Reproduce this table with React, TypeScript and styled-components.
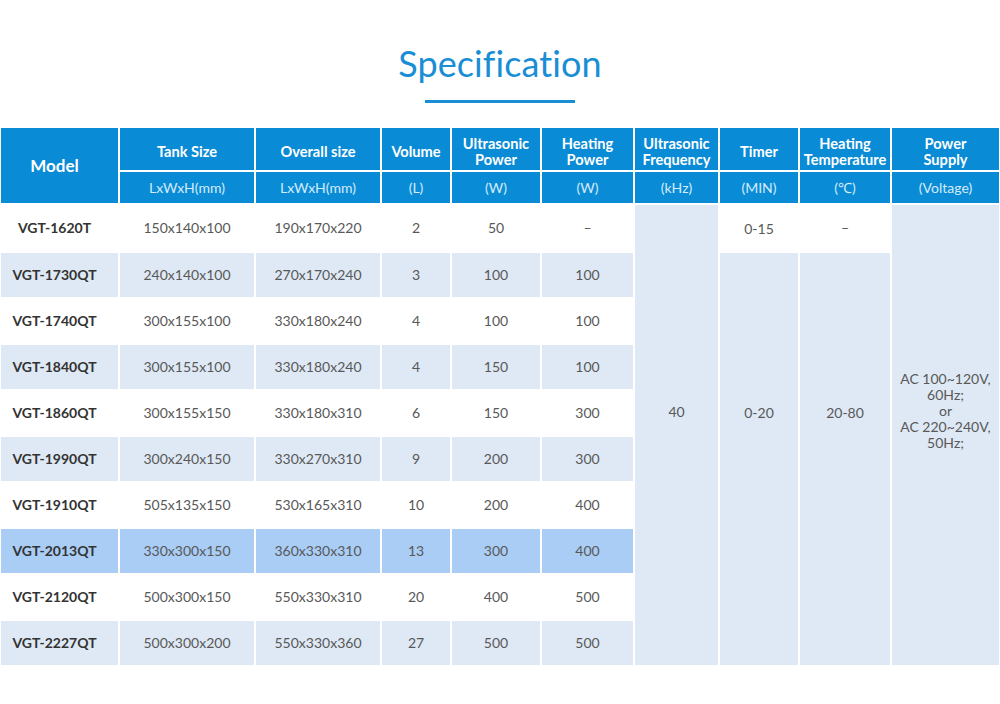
import React from "react";
import styled, { createGlobalStyle } from "styled-components";

const Global = createGlobalStyle`
  html, body { margin: 0; padding: 0; background: #fff; }
  body { font-family: Lato, "Open Sans", Arial, sans-serif; }
`;

const Page = styled.div`
  width: 1000px;
  height: 704px;
  display: flex;
  flex-direction: column;
  align-items: center;
  padding-top: 38px;
  box-sizing: border-box;
`;

const Title = styled.h1`
  margin: 0;
  font-family: Lato, sans-serif;
  font-weight: 400;
  font-size: 36px;
  line-height: 50px;
  color: #1a8ed5;
  letter-spacing: 0.1px;
`;

const Rule = styled.div`
  width: 150px;
  height: 3px;
  background: #1a8ed5;
  margin-top: 12px;
  margin-bottom: 23px;
`;

const Table = styled.table`
  width: 1000px;
  border-collapse: collapse;
  table-layout: fixed;
  font-family: Lato, sans-serif;
  margin: 0 -1px;
`;

const Head = styled.th<{ $big?: boolean }>`
  background: #0a8bd6;
  color: #fff;
  border: 2px solid #fff;
  font-weight: 700;
  font-size: ${(p) => (p.$big ? "17px" : "14.6px")};
  line-height: 16px;
  height: 44px;
  padding: ${(p) => (p.$big ? "0 10px 0 0" : "6px 0 0 0")};
  text-align: center;
  box-sizing: border-box;
`;

const Unit = styled.th`
  background: #0a8bd6;
  color: #d5ebfa;
  border: 2px solid #fff;
  font-weight: 400;
  font-size: 14px;
  height: 31px;
  padding: 0;
  text-align: center;
`;

const Cell = styled.td<{ $bg: string; $model?: boolean; $lift?: number }>`
  background: ${(p) => p.$bg};
  border: 2px solid #fff;
  height: 44px;
  padding: 0 ${(p) => (p.$model ? "10px" : "0")} ${(p) => p.$lift ?? 0}px 0;
  text-align: center;
  font-size: 14px;
  color: ${(p) => (p.$model ? "#333" : "#585858")};
  font-weight: ${(p) => (p.$model ? 700 : 400)};
  line-height: 16px;
`;

const WHITE = "#ffffff";
const LIGHT = "#dee9f5";
const HIGH = "#a9cdf5";

const rows = [
  ["VGT-1620T", "150x140x100", "190x170x220", "2", "50", "–"],
  ["VGT-1730QT", "240x140x100", "270x170x240", "3", "100", "100"],
  ["VGT-1740QT", "300x155x100", "330x180x240", "4", "100", "100"],
  ["VGT-1840QT", "300x155x100", "330x180x240", "4", "150", "100"],
  ["VGT-1860QT", "300x155x150", "330x180x310", "6", "150", "300"],
  ["VGT-1990QT", "300x240x150", "330x270x310", "9", "200", "300"],
  ["VGT-1910QT", "505x135x150", "530x165x310", "10", "200", "400"],
  ["VGT-2013QT", "330x300x150", "360x330x310", "13", "300", "400"],
  ["VGT-2120QT", "500x300x150", "550x330x310", "20", "400", "500"],
  ["VGT-2227QT", "500x300x200", "550x330x360", "27", "500", "500"],
];

const widths = [119, 136, 126, 70, 90, 93, 85, 80, 92, 109];

const rowBg = (i: number) => (i === 7 ? HIGH : i % 2 === 1 ? LIGHT : WHITE);

export default function App() {
  return (
    <Page>
      <Global />
      <Title>Specification</Title>
      <Rule />
      <Table>
        <colgroup>
          {widths.map((w, i) => (
            <col key={i} style={{ width: w }} />
          ))}
        </colgroup>
        <thead>
          <tr>
            <Head $big rowSpan={2}>Model</Head>
            <Head>Tank Size</Head>
            <Head>Overall size</Head>
            <Head>Volume</Head>
            <Head>Ultrasonic<br />Power</Head>
            <Head>Heating<br />Power</Head>
            <Head>Ultrasonic<br />Frequency</Head>
            <Head>Timer</Head>
            <Head>Heating<br />Temperature</Head>
            <Head>Power<br />Supply</Head>
          </tr>
          <tr>
            <Unit>LxWxH(mm)</Unit>
            <Unit>LxWxH(mm)</Unit>
            <Unit>(L)</Unit>
            <Unit>(W)</Unit>
            <Unit>(W)</Unit>
            <Unit>(kHz)</Unit>
            <Unit>(MIN)</Unit>
            <Unit>(℃)</Unit>
            <Unit>(Voltage)</Unit>
          </tr>
        </thead>
        <tbody>
          {rows.map((r, i) => {
            const bg = rowBg(i);
            return (
              <tr key={r[0]}>
                <Cell $bg={bg} $model>{r[0]}</Cell>
                {r.slice(1).map((v, j) => (
                  <Cell key={j} $bg={bg}>{v}</Cell>
                ))}
                {i === 0 && (
                  <>
                    <Cell $bg={LIGHT} rowSpan={10} $lift={46}>40</Cell>
                    <Cell $bg={WHITE} style={{ paddingTop: 2 }}>0-15</Cell>
                    <Cell $bg={WHITE}>–</Cell>
                    <Cell $bg={LIGHT} rowSpan={10} $lift={48}>
                      AC 100~120V,<br />60Hz;<br />or<br />AC 220~240V,<br />50Hz;
                    </Cell>
                  </>
                )}
                {i === 1 && (
                  <>
                    <Cell $bg={LIGHT} rowSpan={9} $lift={92}>0-20</Cell>
                    <Cell $bg={LIGHT} rowSpan={9} $lift={92}>20-80</Cell>
                  </>
                )}
              </tr>
            );
          })}
        </tbody>
      </Table>
    </Page>
  );
}
